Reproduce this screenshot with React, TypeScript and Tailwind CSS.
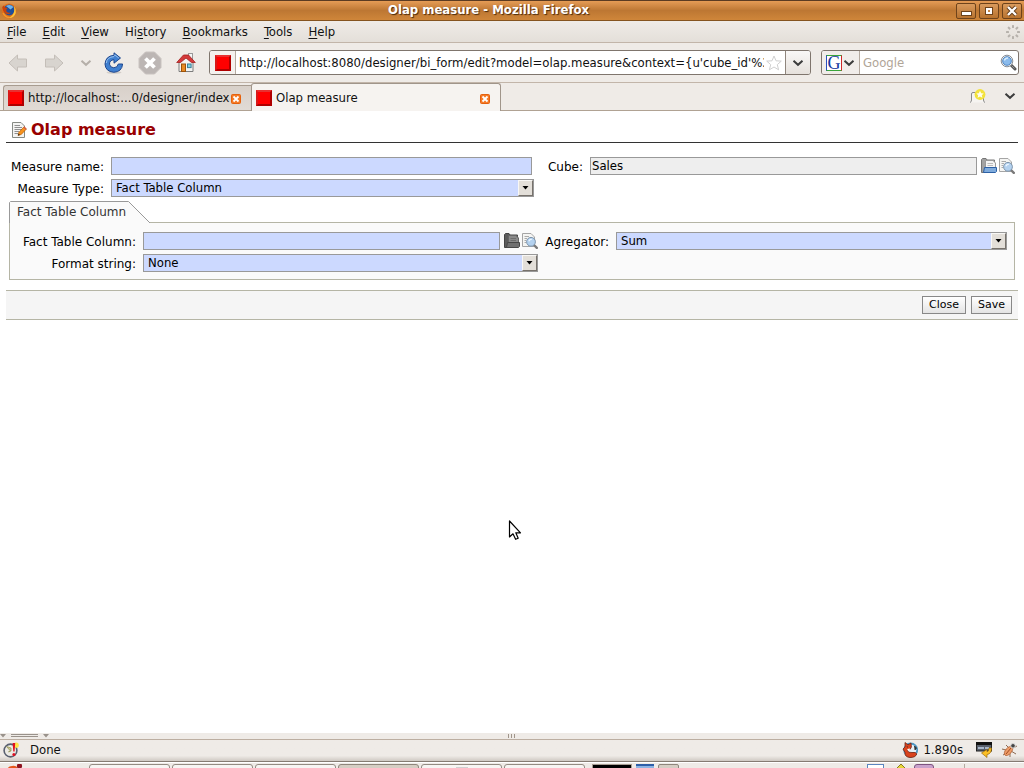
import React from "react";

const ui = "font-['DejaVu_Sans_Condensed','DejaVu_Sans',sans-serif]";

function Favicon() {
  return (
    <span className="block size-4 shrink-0 border-2 border-t-[#e83030] border-l-[#d81818] border-r-[#b00000] border-b-[#b00000] bg-[#ff0000]" />
  );
}

function Chevron({ color = "#3c3c3c" }: { color?: string }) {
  return (
    <svg width="12" height="8" viewBox="0 0 12 8" aria-hidden="true">
      <path d="M1.5 1.8 L6 5.8 L10.5 1.8" fill="none" stroke={color} strokeWidth="2" />
    </svg>
  );
}

function FirefoxIcon() {
  return (
    <svg width="16" height="16" viewBox="0 0 16 16" aria-hidden="true">
      <circle cx="8" cy="8" r="7.4" fill="#e0701a" />
      <circle cx="8.2" cy="7" r="5.4" fill="#1d4f9c" />
      <path d="M5 3 Q9 0.5 12.5 4 L9.5 6.5 L7 4.5Z" fill="#6fb2e8" />
      <path d="M1.2 4 Q2 3 3 2.5 Q3 4 4.6 4.5 L6.5 5 Q4.5 6.5 5.5 8.5 Q7.5 10.5 10 9.5 Q8 12.5 4.5 10.5 Q1.5 8 1.2 4Z" fill="#c8410c" />
      <path d="M13 3 Q15.5 6 14.8 10 Q13 15.5 7.5 15 Q12.5 13 13.2 8 Q13.4 5.5 13 3Z" fill="#fbc53a" />
      <path d="M2 10 Q4 14 8 14.5" fill="none" stroke="#f39a2c" strokeWidth="1.5" />
    </svg>
  );
}

function ArrowIcon({ flip = false }: { flip?: boolean }) {
  return (
    <svg width="20" height="18" viewBox="0 0 20 18" aria-hidden="true">
      <path
        d={flip ? "M19 9 L10.5 1 V5 H1.5 V13 H10.5 V17 Z" : "M1 9 L9.5 1 V5 H18.5 V13 H9.5 V17 Z"}
        fill="#d8d4cf"
        stroke="#c4beb8"
        strokeLinejoin="round"
      />
    </svg>
  );
}

function ReloadIcon() {
  return (
    <svg width="20" height="22" viewBox="0 0 20 22" aria-hidden="true">
      <ellipse cx="10" cy="20.5" rx="7.5" ry="1.3" fill="#d3cec8" />
      <path
        d="M10 3.3 V0.8 L16.5 6 L10 11.2 V7.7 Q5.5 8 5.5 12.2 Q6 15.6 9.8 15.8 Q13.7 15.6 14.3 12 H18.6 Q18 19.8 9.8 20.3 Q1.4 19.5 1 12 Q1.5 4 10 3.3Z"
        fill="#3f7fd0"
        stroke="#1d468e"
      />
      <path d="M10.8 4.2 V2.8 L14.8 6 M2.3 11 Q3 5 10 4.6" fill="none" stroke="#9cc3ee" />
    </svg>
  );
}

function StopIcon() {
  return (
    <svg width="24" height="24" viewBox="0 0 24 24" aria-hidden="true">
      <path d="M7.5 1 H16.5 L23 7.5 V16.5 L16.5 23 H7.5 L1 16.5 V7.5 Z" fill="#bcb6b4" stroke="#c9c3c0" />
      <path d="M7.5 7.5 L16.5 16.5 M16.5 7.5 L7.5 16.5" stroke="#fff" strokeWidth="3.8" />
    </svg>
  );
}

function HomeIcon() {
  return (
    <svg width="20" height="20" viewBox="0 0 20 20" aria-hidden="true">
      <rect x="12.5" y="0.5" width="4" height="6" fill="#f5f5f5" stroke="#999" />
      <path d="M3 9.5 L10 3.5 L17 9.5 V18.5 H3Z" fill="#f3f3f1" stroke="#7d7d7d" />
      <path d="M0.7 9.5 L7.5 2 H12.5 L19.3 9.5 H15.5 L10 5 L4.5 9.5Z" fill="#d43a3a" stroke="#a11f1f" strokeWidth="0.8" />
      <rect x="5.5" y="11" width="4" height="7.5" fill="#e88a24" stroke="#9c520a" />
      <rect x="11.5" y="11" width="3.6" height="3.6" fill="#7fd0e0" stroke="#3c7f98" />
    </svg>
  );
}

function StarIcon() {
  return (
    <svg width="16" height="16" viewBox="0 0 16 16" aria-hidden="true">
      <path d="M8 1 L10 5.8 L15.3 6.1 L11.3 9.6 L12.6 14.8 L8 12 L3.4 14.8 L4.7 9.6 L0.7 6.1 L6 5.8Z" fill="#fff" stroke="#cfcfcf" strokeLinejoin="round" />
    </svg>
  );
}

function MagnifierIcon() {
  return (
    <svg width="17" height="17" viewBox="0 0 17 17" aria-hidden="true">
      <path d="M10.5 10.5 L15 15" stroke="#555" strokeWidth="3" strokeLinecap="round" />
      <path d="M11.5 11.5 L14.5 14.5" stroke="#999" strokeWidth="1" />
      <circle cx="7" cy="7" r="5.8" fill="#eee" stroke="#8a8f96" />
      <circle cx="7" cy="7" r="4.3" fill="#8bbbec" stroke="#4f86c4" />
      <path d="M4.3 6.5 Q5 4 8 4" fill="none" stroke="#d6ebfc" strokeWidth="1.4" />
    </svg>
  );
}

function ThrobberIcon() {
  const dots = [0, 45, 90, 135, 180, 225, 270, 315];
  return (
    <svg width="14" height="14" viewBox="0 0 14 14" aria-hidden="true">
      {dots.map((a) => (
        <rect key={a} x="6" y="0" width="2" height="3" rx="0.6" fill="#b7b2ac" transform={`rotate(${a} 7 7)`} />
      ))}
    </svg>
  );
}

function TabClose({ label }: { label: string }) {
  return (
    <button aria-label={label} className="mt-[2px] block size-3 shrink-0">
      <svg width="12" height="12" viewBox="0 0 12 12" aria-hidden="true">
        <rect x="1.5" y="1.5" width="9" height="9" rx="1" fill="#f57a26" stroke="#e5600c" />
        <path d="M3.5 3.5 L8.5 8.5 M8.5 3.5 L3.5 8.5" stroke="#fff" strokeWidth="1.8" />
      </svg>
    </button>
  );
}

function NewTabIcon() {
  return (
    <svg width="18" height="16" viewBox="0 0 18 16" aria-hidden="true">
      <path d="M1 14.5 Q2.5 14 2.5 12 V6 Q2.5 4.5 4 4.5 H13 Q14.5 4.5 14.5 6 V12 Q14.5 14 16 14.5" fill="#f6f4f1" stroke="#8b8b8b" />
      <circle cx="11" cy="6.5" r="5.4" fill="#f3e23c" />
      <path d="M11 2.8 L12.2 5.2 L14.7 5.5 L12.8 7.2 L13.4 9.8 L11 8.5 L8.6 9.8 L9.2 7.2 L7.3 5.5 L9.8 5.2Z" fill="#fffef0" />
    </svg>
  );
}

function EditPageIcon() {
  return (
    <svg width="16" height="16" viewBox="0 0 16 16" aria-hidden="true">
      <path d="M1.5 0.5 H10 L13.5 4 V15.5 H1.5Z" fill="#f4f4f2" stroke="#868a84" />
      <path d="M3.5 3.5 H9 M3.5 5.5 H11 M3.5 7.5 H11 M3.5 9.5 H8 M3.5 11.5 H7" stroke="#8f8f8f" />
      <path d="M7 13.5 L8 10.2 L13 4.8 L15.4 7 L10.3 12.4Z" fill="#f7931e" stroke="#b85c00" strokeWidth="0.7" />
      <path d="M7 13.5 L7.5 11.5 L9 12.9Z" fill="#222" />
      <path d="M12.8 5 L15.2 7.2" stroke="#d45a4a" strokeWidth="1.4" />
    </svg>
  );
}

function FolderIcon({ disabled = false }: { disabled?: boolean }) {
  return (
    <svg width="16" height="16" viewBox="0 0 16 16" aria-hidden="true">
      <path d="M0.5 14.5 V1.5 L1.5 0.5 H5 L6 2 H13.5 V14.5Z" fill={disabled ? "#5c5c5c" : "#a2a2a2"} stroke={disabled ? "#444" : "#767676"} />
      <path d="M4.5 2.5 H12 L14.5 5 V12 H4.5Z" fill={disabled ? "#8a8a8a" : "#f4f4f4"} stroke={disabled ? "#666" : "#999"} />
      <path d="M6.5 5.5 H12 M6.5 7.5 H12" stroke={disabled ? "#6e6e6e" : "#bbb"} />
      <path d="M3.5 9.5 H15.5 V13.5 L14.5 14.5 H2.5 Z" fill={disabled ? "#707070" : "#7fabdc"} stroke={disabled ? "#484848" : "#2c60a5"} />
    </svg>
  );
}

function FindPageIcon() {
  return (
    <svg width="16" height="16" viewBox="0 0 16 16" aria-hidden="true">
      <path d="M0.5 0.5 H9 L12.5 4 V13.5 H0.5Z" fill="#f5f5f3" stroke="#a5a5a5" />
      <path d="M2.5 3.5 H7 M2.5 5.5 H5 M2.5 7.5 H4 M2.5 9.5 H4" stroke="#aaa" />
      <path d="M12 12 L14.8 14.8" stroke="#7a7a7a" strokeWidth="2.4" strokeLinecap="round" />
      <circle cx="9" cy="8.8" r="4.4" fill="#b3d1ef" stroke="#7d94ab" />
      <path d="M6.8 8.3 Q7.5 6.3 9.8 6.4" fill="none" stroke="#eef7ff" strokeWidth="1.3" />
    </svg>
  );
}

function FieldIcons({ disabled = false }: { disabled?: boolean }) {
  return (
    <span className="flex shrink-0 gap-[2px]">
      <button type="button" aria-label="Open record"><FolderIcon disabled={disabled} /></button>
      <button type="button" aria-label="Search record"><FindPageIcon /></button>
    </span>
  );
}

function Select({ id, value }: { id: string; value: string }) {
  return (
    <div className="relative h-[18px] min-w-0 flex-1">
      <select id={id} className="block h-[18px] w-full appearance-none border border-[#999] bg-[#ccd9ff] pl-1 text-[13px] leading-4 outline-none">
        <option>{value}</option>
      </select>
      <span className="pointer-events-none absolute top-px right-px flex h-4 w-[15px] items-center justify-center border border-t-[#f8f7f5] border-r-[#77726c] border-b-[#77726c] border-l-[#f8f7f5] bg-[#e3dfd9]">
        <svg width="7" height="4" viewBox="0 0 7 4" aria-hidden="true"><path d="M0.5 0 H6.5 L3.5 3.5Z" fill="#000" /></svg>
      </span>
    </div>
  );
}

const label = "text-right font-['DejaVu_Sans',sans-serif] text-[12px] leading-5 h-[18px] whitespace-nowrap";
const field = "block h-[18px] min-w-0 flex-1 border border-[#999] px-px pb-[2px] text-[13px] leading-[14px] outline-none";

function MenuItem({ pre = "", hot, post }: { pre?: string; hot: string; post: string }) {
  return <button className="leading-4">{pre}<span className="underline underline-offset-2">{hot}</span>{post}</button>;
}

const winBtn = "flex h-4 w-5 items-center justify-center rounded-[2px] border border-[#6e431b] bg-linear-to-b from-[#d99a5c] to-[#b8732e]";
const formBtn = "h-[18px] border border-[#888] bg-linear-to-b from-white to-[#e4e4e4] px-[6px] leading-4";

function TaskButton({ active = false, children }: { active?: boolean; children?: React.ReactNode }) {
  return (
    <span className={`flex h-5 w-[81px] justify-center rounded-t-[3px] border pt-[1px] ${active ? "border-[#8f867c] bg-[#d6cec4]" : "border-[#938b82] bg-[#f7f5f3]"}`}>
      {children}
    </span>
  );
}

export default function App() {
  return (
    <div className={`relative flex h-screen flex-col overflow-hidden bg-white text-[13px] text-[#111] ${ui}`}>
      <header className="flex h-[21px] shrink-0 items-center border-t border-b border-t-[#5b3b22] border-b-[#85531f] bg-linear-to-b from-[#e59c56] via-[#bd7733] to-[#cf863a] pr-[2px] pl-px">
        <div className="flex w-5 items-center"><FirefoxIcon /></div>
        <div className="flex-1 pb-[2px] text-center text-[13px] leading-4 font-bold text-white [text-shadow:1px_1px_1px_#4a2a0c]">Olap measure - Mozilla Firefox</div>
        <div className="flex w-[66px] gap-[3px]">
          <button aria-label="Minimize" className={winBtn}><span className="mt-[6px] h-[3px] w-[9px] bg-white shadow-[0_0_0_1px_#6e431b]" /></button>
          <button aria-label="Maximize" className={winBtn}><span className="size-[6px] border-2 border-white shadow-[0_0_0_1px_#6e431b]" /></button>
          <button aria-label="Close window" className={winBtn}>
            <svg width="12" height="12" viewBox="0 0 12 12" aria-hidden="true">
              <path d="M2 2 L10 10 M10 2 L2 10" stroke="#5f3a18" strokeWidth="4" />
              <path d="M2 2 L10 10 M10 2 L2 10" stroke="#fff" strokeWidth="2.4" />
            </svg>
          </button>
        </div>
      </header>

      <nav className="flex h-[22px] shrink-0 items-center border-b border-[#c2b5a9] bg-linear-to-b from-[#efebe7] to-[#e4dfd9] pr-1 pl-[7px]">
        <div className="flex flex-1 gap-4">
          <MenuItem hot="F" post="ile" />
          <MenuItem hot="E" post="dit" />
          <MenuItem hot="V" post="iew" />
          <MenuItem pre="Hi" hot="s" post="tory" />
          <MenuItem hot="B" post="ookmarks" />
          <MenuItem hot="T" post="ools" />
          <MenuItem hot="H" post="elp" />
        </div>
        <ThrobberIcon />
      </nav>

      <div className="flex h-10 shrink-0 items-center border-b border-[#c2b5a9] bg-[#efebe7] pr-[5px] pl-2">
        <div className="flex w-[201px] items-center">
          <button aria-label="Back" className="w-9"><ArrowIcon /></button>
          <button aria-label="Forward" className="w-9"><ArrowIcon flip /></button>
          <button aria-label="Recent pages" className="w-6"><Chevron color="#b5afa9" /></button>
          <button aria-label="Reload" className="w-[34px]"><ReloadIcon /></button>
          <button aria-label="Stop" className="w-[38px]"><StopIcon /></button>
          <button aria-label="Home"><HomeIcon /></button>
        </div>
        <div className="flex h-[25px] flex-1 items-stretch overflow-hidden rounded-[3px] border border-[#7f756d] bg-white">
          <div className="flex w-[26px] items-center border-r border-[#b5aaa0] bg-[#f4f1ee] pl-[5px]"><Favicon /></div>
          <input
            aria-label="Location"
            className="ml-[3px] min-w-0 flex-1 bg-transparent outline-none"
            defaultValue="http://localhost:8080/designer/bi_form/edit?model=olap.measure&context={u'cube_id'%3A"
          />
          <button aria-label="Bookmark this page" className="mr-[3px] ml-[2px]"><StarIcon /></button>
          <button aria-label="Show history" className="flex w-[25px] items-center justify-center border-l border-[#8f857c] bg-linear-to-b from-[#f9f7f6] to-[#e6e1dc]"><Chevron /></button>
        </div>
        <div className="ml-[10px] flex h-[25px] w-[198px] items-center overflow-hidden rounded-[3px] border border-[#7f756d] bg-white">
          <button aria-label="Search engine" className="flex h-full w-[38px] shrink-0 items-center gap-px border-r border-[#b5aaa0] bg-[#f1edea] pl-1">
            <span className="flex size-4 items-center justify-center border border-t-[#3aa53a] border-r-[#d02a2a] border-b-[#3aa53a] border-l-[#2a4fc0] bg-white font-['Liberation_Serif',serif] text-[18px] leading-[14px] text-[#1438a0]">G</span>
            <Chevron />
          </button>
          <input aria-label="Search" placeholder="Google" className="ml-[3px] min-w-0 flex-1 bg-transparent outline-none placeholder:text-[#b0a597]" />
          <button aria-label="Search the web" className="mr-px"><MagnifierIcon /></button>
        </div>
      </div>

      <div className="flex h-7 shrink-0 items-end border-b border-[#b0a293] bg-[#efebe7] pr-2 pl-[3px]">
        <div className="flex h-[25px] w-[248px] items-center gap-1 rounded-tl-[3px] border border-r-0 border-b-0 border-[#a89c90] bg-linear-to-b from-[#d8d0c9] to-[#e1dbd5] pr-[9px] pl-1">
          <Favicon />
          <a href="#index" className="min-w-0 flex-1 whitespace-nowrap">http://localhost:...0/designer/index</a>
          <TabClose label="Close tab index" />
        </div>
        <div className="-mb-px flex h-7 w-[250px] items-center gap-1 rounded-t-[3px] border border-b-0 border-[#a0958a] bg-[#f6f3f0] pr-[9px] pl-1">
          <Favicon />
          <a href="#measure" className="flex-1 whitespace-nowrap">Olap measure</a>
          <TabClose label="Close tab Olap measure" />
        </div>
        <div className="flex flex-1 items-center justify-end gap-[17px] pb-[6px]">
          <button aria-label="New tab"><NewTabIcon /></button>
          <button aria-label="List all tabs"><Chevron /></button>
        </div>
      </div>

      <main className="min-h-0 flex-1 bg-white px-[6px] text-black">
        <div className="flex h-8 items-center gap-1 border-b border-[#333] pt-[6px] pl-[5px]">
          <EditPageIcon />
          <h1 className="font-['DejaVu_Sans',sans-serif] text-[16px] leading-5 font-bold text-[#990000]">Olap measure</h1>
        </div>

        <form className="mt-[14px]">
          <div className="px-[3px]">
            <div className="grid grid-cols-[95px_423fr_42px_425fr] gap-x-[7px] gap-y-1">
              <label htmlFor="name" className={label}>Measure name:</label>
              <div className="flex pr-[2px]"><input id="name" className={`${field} bg-[#ccd9ff]`} /></div>
              <label htmlFor="cube" className={label}>Cube:</label>
              <div className="flex gap-1">
                <input id="cube" readOnly defaultValue="Sales" className={`${field} bg-[#eeeeee]`} />
                <FieldIcons />
              </div>
              <label htmlFor="type" className={label}>Measure Type:</label>
              <Select id="type" value="Fact Table Column" />
            </div>

            <div className="mt-1 flex h-[22px]">
              <button type="button" className="relative z-10 h-[22px] w-[142px] text-left font-['DejaVu_Sans',sans-serif] text-[12px] text-[#333]">
                <svg className="absolute inset-0" width="142" height="22" viewBox="0 0 142 22" aria-hidden="true">
                  <path d="M0.5 22 V1.5 L1.5 0.5 H119.5 L141 22" fill="#fafafa" stroke="#999" />
                </svg>
                <span className="relative pl-2 leading-[22px]">Fact Table Column</span>
              </button>
            </div>
            <div className="-mt-px border border-[#b5b5a5] bg-[#fafafa] px-[7px] pt-[9px] pb-[7px]">
              <div className="grid grid-cols-[119px_395fr_64px_391fr] gap-x-[7px] gap-y-1">
                <label htmlFor="column" className={label}>Fact Table Column:</label>
                <div className="flex gap-1">
                  <input id="column" className={`${field} bg-[#ccd9ff]`} />
                  <FieldIcons disabled />
                </div>
                <label htmlFor="agg" className={label}>Agregator:</label>
                <Select id="agg" value="Sum" />
                <label htmlFor="format" className={label}>Format string:</label>
                <Select id="format" value="None" />
              </div>
            </div>
          </div>

          <div className="mt-[10px] flex h-[30px] items-center justify-end gap-[5px] border-y border-[#b5b5a5] bg-[#f5f5f5] pr-[6px] font-['DejaVu_Sans',sans-serif] text-[11px]">
            <button type="button" className={formBtn}>Close</button>
            <button type="button" className={formBtn}>Save</button>
          </div>
        </form>
      </main>

      <div className="flex h-[7px] shrink-0 items-center border-b border-[#bcaea1] bg-[#efebe7]">
        <div className="flex flex-1 items-center">
          <svg width="50" height="6" viewBox="0 0 50 6" aria-hidden="true">
            <path d="M0 1 H6 L3 4.5Z M43 1 H49 L46 4.5Z" fill="#99928b" />
            <path d="M11 1.5 H38 M11 3.5 H38" stroke="#99928b" />
          </svg>
        </div>
        <svg width="8" height="4" viewBox="0 0 8 4" aria-hidden="true"><path d="M0.5 0 V4 M3.5 0 V4 M6.5 0 V4" stroke="#a0958a" /></svg>
        <div className="flex-1" />
      </div>

      <footer className="flex h-[22px] shrink-0 items-center border-b border-[#857b72] bg-linear-to-b from-[#efebe7] from-75% to-[#cfc9c3] pr-[6px] pb-[2px] pl-[3px]">
        <svg width="16" height="16" viewBox="0 0 16 16" aria-hidden="true">
          <circle cx="7.5" cy="8.5" r="6.4" fill="#eceae4" stroke="#596070" strokeWidth="1.6" />
          <path d="M3.5 4.5 L8 6 V9 L5.5 10 L7 8.5Z" fill="#cfc98a" stroke="#8c8c50" strokeWidth="0.7" />
          <circle cx="13.2" cy="3.2" r="2.6" fill="#ffe348" />
          <path d="M9.6 1 H12.2 L11.6 9.6 H10.3Z" fill="#e01020" />
          <circle cx="10.9" cy="12.4" r="1.5" fill="#e01020" />
        </svg>
        <span className="flex-1 pl-[11px] leading-4">Done</span>
        <svg width="16" height="16" viewBox="0 0 16 16" aria-hidden="true">
          <circle cx="8.7" cy="8" r="6.5" fill="#e6f0f6" stroke="#4f97c4" strokeWidth="1.8" />
          <path d="M3 0.5 L6 2.8 L9 1 L9.4 5 L8 7.5 L5.5 8.5 Q6 11 10 10.5 Q14 9.8 14.8 12 Q13.5 15.6 8 15.5 Q2.6 15 3 10.5 L1 7 L3 5Z" fill="#d9431e" stroke="#6e2414" strokeWidth="0.8" />
          <path d="M5.2 7 L8 6.5 L7.5 9 L6 8.8Z" fill="#fff" />
          <path d="M12.5 4 L14.5 6 L13 8Z M4.8 4.5 L6 5.3" fill="#333" stroke="#222" strokeWidth="0.7" />
        </svg>
        <span className="pr-[13px] pl-[5px] leading-4">1.890s</span>
        <svg width="17" height="16" viewBox="0 0 17 16" aria-hidden="true">
          <rect x="0.5" y="0.5" width="15" height="8.5" fill="#58606c" stroke="#222" />
          <path d="M0 1.5 H16" stroke="#111" strokeWidth="3" />
          <path d="M2 6 H8 M9 6 H13" stroke="#c2d2e8" strokeWidth="1.6" />
          <path d="M15.5 6 Q15.5 12 11 12.5 V15.5 L5.5 11 L11 7.5 V9.8 Q13 9.5 13 6Z" fill="#fbbf24" stroke="#9a6a08" strokeWidth="0.7" />
        </svg>
        <svg className="ml-2" width="17" height="16" viewBox="0 0 17 16" aria-hidden="true">
          <path d="M1 7 L5 8 M2 13 L6 11 M5 3 L8 6 M9 15 L9 11 M15 12 L10 9 M12 1 L10 4 M16 4 L12 6" stroke="#8c6a52" />
          <ellipse cx="7.5" cy="9" rx="3" ry="5.4" fill="#ee9c68" stroke="#b4653a" strokeWidth="0.8" transform="rotate(40 7.5 9)" />
          <path d="M5 12 L10 6" stroke="#a04c20" />
          <circle cx="12" cy="3.8" r="2.3" fill="#444" stroke="#ddd" />
        </svg>
      </footer>

      <div className="flex h-[6px] shrink-0 items-start gap-[2px] overflow-hidden border-t border-white bg-[#efebe7] pt-px pl-[6px]">
        <svg className="mr-[63px] shrink-0" width="18" height="6" viewBox="0 0 18 6" aria-hidden="true">
          <path d="M1 6 Q2 2 6 2 Q11 1 13 6Z" fill="#e6561c" />
          <circle cx="13.5" cy="2" r="2.6" fill="#8e1420" />
        </svg>
        <TaskButton />
        <TaskButton><svg width="10" height="4" viewBox="0 0 10 4" aria-hidden="true"><path d="M1 4 Q5 0 9 4Z" fill="#2b4fa8" /></svg></TaskButton>
        <TaskButton />
        <TaskButton active />
        <TaskButton><span className="mt-px h-3 w-3 bg-[#d0d0d0]" /></TaskButton>
        <TaskButton><svg width="10" height="4" viewBox="0 0 10 4" aria-hidden="true"><path d="M1 4 Q5 0 9 4Z" fill="#5c9c1c" /></svg></TaskButton>
        <span className="ml-[5px] h-5 w-10 border border-[#a79d93] bg-black" />
        <span className="ml-[2px] h-5 w-[18px] border-t-2 border-[#2f5fa8] bg-[#8db4e4]" />
        <span className="ml-[2px] h-5 w-[21px] rounded-t-[2px] border border-[#8f867c] bg-[#d6cec4]" />
        <span className="flex-1" />
        <span className="h-5 w-[17px] border border-[#5c86c0] bg-white" />
        <svg className="ml-2" width="14" height="6" viewBox="0 0 14 6" aria-hidden="true"><path d="M1 6 L7 0 L13 6Z" fill="#e8d838" stroke="#8a7a20" /></svg>
        <span className="mr-7 ml-1 h-5 w-5 rounded-t-[3px] border border-[#7d5480] bg-[#c9a2cc]" />
        <span className="mr-[59px] h-5 w-px bg-[#b5aaa0]" />
      </div>

      <svg className="pointer-events-none absolute top-[520px] left-[508px]" width="15" height="22" viewBox="0 0 15 22" aria-hidden="true">
        <path d="M1.5 1 V17 L5 13.8 L7.6 19.3 L10.2 18.2 L7.8 12.8 H12.5Z" fill="#fff" stroke="#000" strokeWidth="1.2" strokeLinejoin="round" />
      </svg>
    </div>
  );
}
